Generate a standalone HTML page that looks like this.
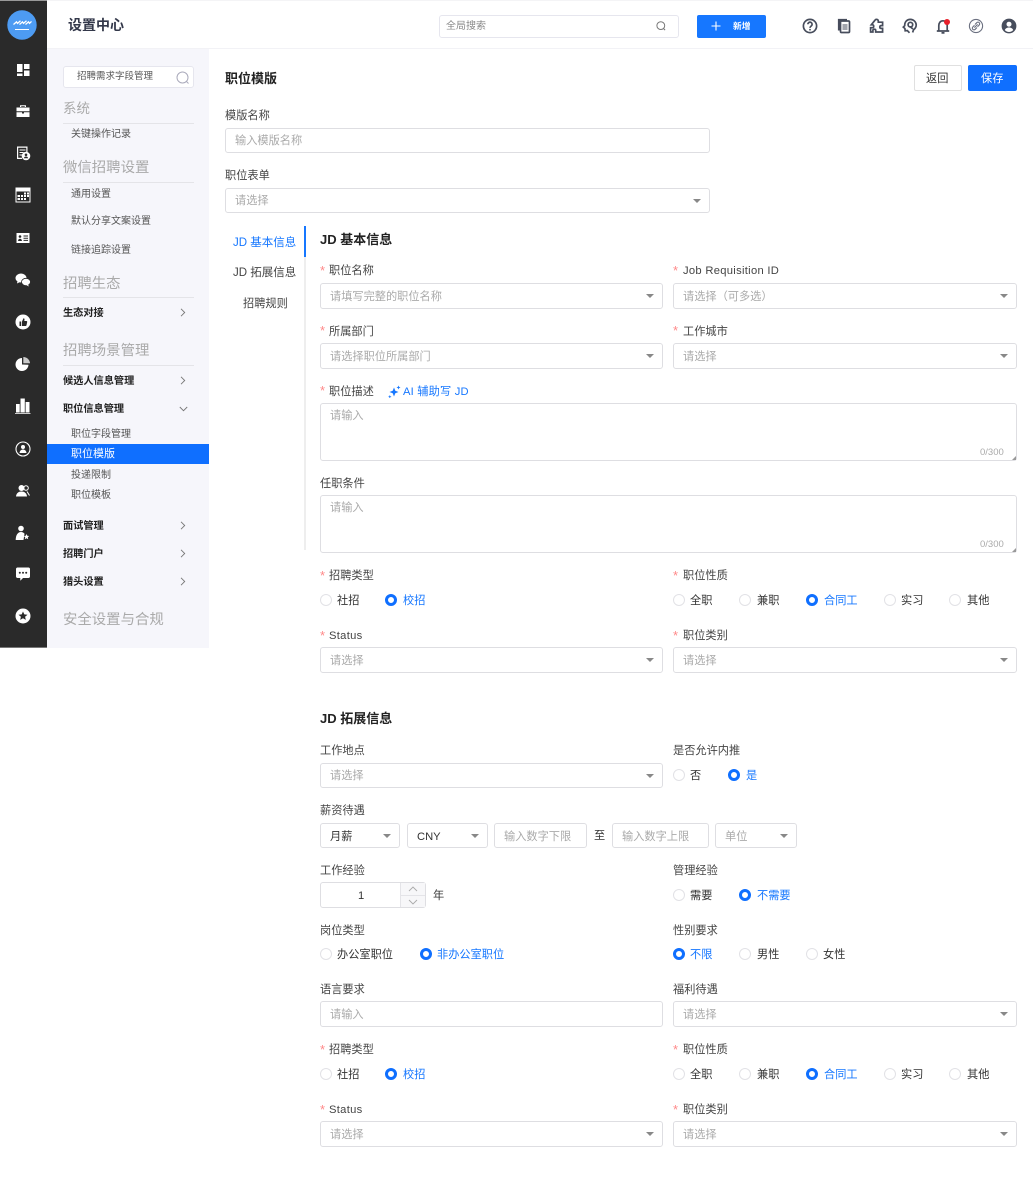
<!DOCTYPE html>
<html lang="zh-CN"><head><meta charset="utf-8"><title>设置中心</title>
<style>
*{box-sizing:border-box}
html,body{margin:0;padding:0;background:#fff;width:1033px;height:1177px;overflow:hidden}
#w{position:absolute;left:0;top:0;width:1033px;height:1177px;overflow:hidden;filter:blur(.35px);font-family:"Liberation Sans","Noto Sans CJK SC",sans-serif;font-size:11.2px;color:#333}
.a,.t,.c,.r,.s,svg{position:absolute}
.t{line-height:16px;height:16px;white-space:nowrap;margin-top:1px}
.l{color:#444}
.p{color:#aaa}
.c{border:1px solid #dedee2;border-radius:3px;background:#fff;height:26px}
.s::after{content:"";position:absolute;right:8px;top:10px;border:4px solid transparent;border-top:4.5px solid #888;border-bottom:0}
.c>span{position:absolute;left:9px;top:5px;line-height:16px;color:#aaa;white-space:nowrap}
.r{width:12px;height:12px;border-radius:50%;border:1px solid #e2e2e6;background:#fff}
.r.on{border:3.5px solid #0f6fff}
.b{color:#1677ff}
.st{color:#f88;font-size:13px;margin-top:0}
.e{letter-spacing:.3px}
.g{color:#aaa;font-size:14.4px;left:63px}
.i{color:#555;font-size:10px;left:71px;margin-top:2px}
.m{color:#222;font-size:10.2px;font-weight:700;left:63px;margin-top:2px}
.h{height:1px;left:63px;width:131px;background:#e4e4e8}
.ar{left:180px;width:6px;height:9px}
svg.n{left:15px;width:16px;height:16px;fill:#fff;stroke:none}
svg.u{top:17px;width:18px;height:18px;fill:none;stroke:#474d5c;stroke-width:1.7}
</style></head><body><div id="w">

<!-- top header -->
<div class="a" style="left:47px;top:0;width:986px;height:1px;background:#f4f4f6"></div>
<div class="a" style="left:47px;top:48px;width:986px;height:1px;background:#f2f2f6"></div>
<div class="t" style="left:68px;top:17px;margin-top:0;font-size:14px;font-weight:700;color:#33384a">设置中心</div>
<div class="a" style="left:439px;top:15px;width:240px;height:23px;border:1px solid #e6e6ee;border-radius:3px"></div>
<div class="t" style="left:446px;top:18px;font-size:10px;color:#888">全局搜索</div>
<svg class="a" style="left:655px;top:20px;width:12px;height:12px;fill:none;stroke:#777;stroke-width:1" viewBox="0 0 12 12"><circle cx="5.8" cy="5.6" r="3.9"/><path d="M8.5 8.5l1.6 1.6"/></svg>
<div class="a" style="left:697px;top:15px;width:69px;height:23px;background:#1677ff;border-radius:2px"></div>
<svg class="a" style="left:711px;top:21px;width:10px;height:10px;stroke:#fff;stroke-width:1.1" viewBox="0 0 10 10"><path d="M5 .5v9M.5 5h9"/></svg>
<div class="t" style="left:733px;top:18px;margin-top:0;font-size:8.8px;color:#fff;font-weight:700">新增</div>

<svg class="u" style="left:801px" viewBox="0 0 18 18"><circle cx="9" cy="9" r="6.6"/><path d="M6.9 7.3a2.1 2.1 0 1 1 3.3 1.7c-.8.6-1.2.9-1.2 1.9"/><circle cx="9" cy="12.7" r=".6" fill="#474d5c" stroke-width=".6"/></svg>
<svg class="u" style="left:835px" viewBox="0 0 18 18"><path d="M4 13.5V3h8" stroke-width="2.2"/><rect x="5.5" y="4" width="9" height="11.5" rx="1"/><path d="M7.5 8h5M7.5 10h5M7.5 12h5" stroke-width="1.1"/></svg>
<svg class="u" style="left:868px" viewBox="0 0 18 18"><path d="M7 3.2c1-1.5 3.4-.9 3.3 1.1v.9h4.3v3.4h-1.5c-1.7 0-1.7 2.8 0 2.8h1.5v3.6H7.7v-1.7c0-1.5-2.8-1.5-2.8 0v1.7H2.6v-4.3h1.9c1.6 0 1.6-2.9 0-2.9H3.3L7 3.2z"/></svg>
<svg class="u" style="left:901px" viewBox="0 0 18 18"><path d="M8.5 15.8l-2.2-2.3-2.1.3-.3-2.3-1.6-1.4 1.4-1.4C3.6 4.8 6 2.4 9.3 2.4c3.3 0 5.9 2.6 5.9 5.6 0 2.2-1.2 3.7-2.6 4.7l-1 2.7"/><circle cx="9.4" cy="7.6" r="2.3"/><path d="M9.4 9.9l2.5 2"/></svg>
<svg class="u" style="left:934px" viewBox="0 0 18 18"><path d="M2.8 14h12.4M4.8 13.8V8.6C4.8 5.8 6.4 3.8 9 3.8s4.2 2 4.2 4.8v5.2M7.5 15.9h3"/></svg>
<div class="a" style="left:944px;top:19px;width:6px;height:6px;border-radius:50%;background:#e8202a"></div>
<svg class="u" style="left:967px;stroke-width:1.1;stroke:#6b7080" viewBox="0 0 18 18"><circle cx="9" cy="9" r="6.6"/><path d="M8 7.5l1.8-1.8a1.6 1.6 0 0 1 2.4 2.3L10.5 9.8M10 10.5l-1.8 1.8a1.6 1.6 0 0 1-2.4-2.3L7.5 8.2M7.4 10.6l3.2-3.2"/></svg>
<svg class="a" style="left:1000px;top:17px;width:18px;height:18px" viewBox="0 0 18 18"><circle cx="9" cy="9" r="7.4" fill="#474d5c"/><circle cx="9" cy="7.2" r="2.5" fill="#fff"/><path d="M4.8 13c.8-1.8 2.4-2.5 4.2-2.5s3.4.7 4.2 2.5a5.5 5.5 0 0 1-8.4 0z" fill="#fff"/></svg>

<!-- left nav -->
<div class="a" style="left:0;top:0;width:47px;height:648px;background:#2a2a2a;border-top:1px solid #999;border-bottom:1px solid #777"></div>
<svg class="a" style="left:7px;top:10px;width:30px;height:30px" viewBox="0 0 30 30"><circle cx="15" cy="15" r="14.7" fill="#4d9bf2"/><path d="M6.500 14.500l3-2.600 1 1.500 3-2.600M12.500 14.500l3-2.600 1 1.500 3-2.600M18.500 14.500l3-2.600 1 1.500 2-2" fill="none" stroke="#fff" stroke-width="1.300"/><path d="M8 19.500h14" stroke="#fff" stroke-width="1"/></svg>
<svg class="n" style="top:62px" viewBox="0 0 16 16"><path d="M2 2h5.500v8H2zM9 2h5.500v5H9zM9 8.500h5.500V14H9zM2 11.500h5.500V14H2z"/></svg>
<svg class="n" style="top:103px" viewBox="0 0 16 16"><path d="M5 4V2.200h6V4h-1.200V3.300H6.200V4zM1.500 4.500h13v3.700h-13zM1.500 9.200h5.500V10.500h2V9.200h5.500V14H1.500z"/></svg>
<svg class="n" style="top:145px" viewBox="0 0 16 16"><path d="M2 1.500h10.500V8h-1.200V2.700H3.200v10h3.800V14H2z"/><path d="M4.500 4.500h6v1h-6zM4.500 7h4v1h-4zM4.500 9.500h2.500v1h-2.500z"/><circle cx="11" cy="11" r="4.300"/><circle cx="11" cy="9.800" r="1.300" fill="#2a2a2a"/><path d="M8.800 13.300c.4-1.300 1.200-1.800 2.200-1.800s1.800.5 2.200 1.800z" fill="#2a2a2a"/></svg>
<svg class="n" style="left:15px;top:187px" viewBox="0 0 16 16"><path d="M.5.500h15v15H.5zM1.500 4.500v10h13v-10z"/><path d="M9 5.500h2v2H9zM12 5.500h2v2h-2zM6 8h2v2H6zM9 8h2v2H9zM12 8h2v2h-2zM2.500 8h2.500v2H2.500zM2.500 11h2.500v2H2.500zM6 11h2v2H6zM9 11h2v2H9z"/></svg>
<svg class="n" style="top:230px" viewBox="0 0 16 16"><path d="M1.500 3h13v10h-13z"/><circle cx="5" cy="6.500" r="1.300" fill="#2a2a2a"/><path d="M3 11c.2-1.600 1-2.300 2-2.300s1.800.7 2 2.300zM8.500 5.500h4.500v1H8.500zM8.500 7.700h4.500v1H8.500zM8.500 9.900h4.500v1H8.500z" fill="#2a2a2a"/></svg>
<svg class="n" style="top:272px" viewBox="0 0 16 16"><ellipse cx="6" cy="6" rx="5.500" ry="4.500"/><path d="M2.500 9l-.5 2.500L5 10z"/><ellipse cx="11" cy="10" rx="4.500" ry="3.700" stroke="#2a2a2a" stroke-width=".8"/><path d="M13 12.800l1 1.700-2.600-1.200z"/></svg>
<svg class="n" style="top:314px" viewBox="0 0 16 16"><circle cx="8" cy="8" r="7.500"/><path d="M4.500 7.500h1.700v4.500H4.500zM7 7.500L8.500 4.200c.9 0 1.100.8 1 1.500l-.2 1.300h2.200c.5 0 .8.500.7 1l-.7 3.200c-.1.400-.4.800-.9.800H7z" fill="#2a2a2a"/></svg>
<svg class="n" style="top:356px" viewBox="0 0 16 16"><path d="M7 2a6.500 6.500 0 1 0 6.500 6.800L7 8.500z"/><path d="M8.300 1v6.200h6.700A6.800 6.800 0 0 0 8.300 1z" opacity=".75"/></svg>
<svg class="n" style="top:398px" viewBox="0 0 16 16"><path d="M5.500 .5h4.300V14.500H5.500zM1 6h3.700v8.500H1zM10.600 4h3.900v10.500h-3.900zM0 15h15.500v.8H0z"/></svg>
<svg class="n" style="top:441px" viewBox="0 0 16 16"><circle cx="8" cy="8" r="7" fill="none" stroke="#fff" stroke-width="1.100"/><circle cx="8" cy="6" r="2"/><path d="M4.500 12c.3-2.500 1.800-3.500 3.500-3.500s3.200 1 3.500 3.500z"/></svg>
<svg class="n" style="top:483px" viewBox="0 0 16 16"><circle cx="6.500" cy="5" r="3"/><path d="M1 13.500c.3-3.500 2.700-5 5.500-5s5.200 1.500 5.500 5z"/><circle cx="11" cy="5" r="2.300" fill="none" stroke="#fff"/><path d="M12 8.500l2.500 4" stroke="#fff" stroke-width="1"/></svg>
<svg class="n" style="top:525px" viewBox="0 0 16 16"><circle cx="6" cy="3.500" r="2.800"/><path d="M.7 15c0-5 2.200-8 5.300-8 1.500 0 2.700.7 3.500 1.800L8.500 15z"/><path d="M11.500 9l.8 1.800 1.900.2-1.400 1.300.4 1.900-1.700-1-1.700 1 .4-1.900L8.800 11l1.900-.2z"/></svg>
<svg class="n" style="top:566px" viewBox="0 0 16 16"><path d="M2.500 1.500h11c.8 0 1.500.7 1.500 1.500v7.500c0 .8-.7 1.500-1.500 1.500H8l-2.700 2.800V12H2.500C1.700 12 1 11.300 1 10.500V3c0-.8.700-1.500 1.500-1.500z"/><circle cx="4.800" cy="6.800" r="1" fill="#2a2a2a"/><circle cx="8" cy="6.800" r="1" fill="#2a2a2a"/><circle cx="11.200" cy="6.800" r="1" fill="#2a2a2a"/></svg>
<svg class="n" style="top:608px" viewBox="0 0 16 16"><circle cx="8" cy="8" r="7.500"/><path d="M8 3.500l1.300 2.900 3.200.3-2.400 2.100.7 3.100L8 10.300l-2.800 1.600.7-3.100-2.400-2.100 3.200-.3z" fill="#2a2a2a"/></svg>

<!-- sidebar -->
<div class="a" style="left:47px;top:49px;width:162px;height:599px;background:#f6f6fb"></div>
<div class="a" style="left:63px;top:66px;width:131px;height:22px;background:#fff;border:1px solid #e6e6ee;border-radius:3px"></div>
<div class="t" style="left:77px;top:68px;font-size:9.500px;color:#555">招聘需求字段管理</div>
<svg class="a" style="left:175px;top:70px;width:15px;height:15px;fill:none;stroke:#aab;stroke-width:1" viewBox="0 0 15 15"><circle cx="7.500" cy="7.500" r="5.500"/><path d="M11.500 11.500l2 2"/></svg>

<div class="t g" style="top:100px;font-size:13.500px">系统</div><div class="a h" style="top:123px"></div>
<div class="t i" style="top:125px">关键操作记录</div>
<div class="t g" style="top:159px">微信招聘设置</div><div class="a h" style="top:182px"></div>
<div class="t i" style="top:185px">通用设置</div>
<div class="t i" style="top:212px">默认分享文案设置</div>
<div class="t i" style="top:241px">链接追踪设置</div>
<div class="t g" style="top:275px">招聘生态</div><div class="a h" style="top:297px"></div>
<div class="t m" style="top:304px">生态对接</div>
<div class="t g" style="top:342px">招聘场景管理</div><div class="a h" style="top:365px"></div>
<div class="t m" style="top:372px">候选人信息管理</div>
<div class="t m" style="top:400px">职位信息管理</div>
<div class="t i" style="top:425px">职位字段管理</div>
<div class="a" style="left:47px;top:444px;width:162px;height:20px;background:#0f6fff"></div>
<div class="t" style="left:71px;top:445px;font-size:11px;color:#fff">职位模版</div>
<div class="t i" style="top:466px">投递限制</div>
<div class="t i" style="top:486px">职位模板</div>
<div class="t m" style="top:517px">面试管理</div>
<div class="t m" style="top:545px">招聘门户</div>
<div class="t m" style="top:573px">猎头设置</div>
<div class="t g" style="top:611px">安全设置与合规</div>
<svg class="a ar" style="top:308px" viewBox="0 0 6 9" fill="none" stroke="#777" stroke-width=".9"><path d="M1 .8l3.700 3.700L1 8.200"/></svg>
<svg class="a ar" style="top:376px" viewBox="0 0 6 9" fill="none" stroke="#777" stroke-width=".9"><path d="M1 .8l3.700 3.700L1 8.200"/></svg>
<svg class="a" style="left:179px;top:406px;width:9px;height:6px" viewBox="0 0 9 6" fill="none" stroke="#777" stroke-width=".9"><path d="M.8 1l3.700 3.700L8.200 1"/></svg>
<svg class="a ar" style="top:521px" viewBox="0 0 6 9" fill="none" stroke="#777" stroke-width=".9"><path d="M1 .8l3.700 3.700L1 8.200"/></svg>
<svg class="a ar" style="top:549px" viewBox="0 0 6 9" fill="none" stroke="#777" stroke-width=".9"><path d="M1 .8l3.700 3.700L1 8.200"/></svg>
<svg class="a ar" style="top:577px" viewBox="0 0 6 9" fill="none" stroke="#777" stroke-width=".9"><path d="M1 .8l3.700 3.700L1 8.200"/></svg>

<!-- page head -->
<div class="t" style="left:225px;top:70px;font-size:13px;font-weight:700;color:#222">职位模版</div>
<div class="a" style="left:914px;top:65px;width:48px;height:26px;border:1px solid #e0e0e0;border-radius:2px"></div>
<div class="t" style="left:926px;top:70px;color:#333">返回</div>
<div class="a" style="left:968px;top:65px;width:49px;height:26px;background:#0f6fff;border-radius:2px"></div>
<div class="t" style="left:981px;top:70px;color:#fff">保存</div>

<div class="t l" style="left:225px;top:107px">模版名称</div>
<div class="c" style="left:225px;top:128px;width:485px;height:25px"><span style="top:4px">输入模版名称</span></div>
<div class="t l" style="left:225px;top:167px">职位表单</div>
<div class="c s" style="left:225px;top:188px;width:485px;height:25px"><span style="top:4px">请选择</span></div>

<!-- anchors -->
<div class="a" style="left:304px;top:226px;width:2px;height:324px;background:#eeeeee"></div>
<div class="a" style="left:304px;top:226px;width:2px;height:31px;background:#1677ff"></div>
<div class="t b" style="left:233px;top:234px;font-size:11.500px">JD 基本信息</div>
<div class="t l" style="left:233px;top:264px;font-size:11.500px">JD 拓展信息</div>
<div class="t l" style="left:243px;top:295px">招聘规则</div>

<!-- JD basic -->
<div class="t" style="left:320px;top:231px;font-size:13px;font-weight:700;color:#222">JD 基本信息</div>

<div class="t st" style="left:320px;top:263px">*</div><div class="t l" style="left:329px;top:262px">职位名称</div>
<div class="c s" style="left:320px;top:283px;width:343px"><span>请填写完整的职位名称</span></div>
<div class="t st" style="left:673px;top:263px">*</div><div class="t l e" style="left:683px;top:262px">Job Requisition ID</div>
<div class="c s" style="left:673px;top:283px;width:344px"><span>请选择（可多选）</span></div>

<div class="t st" style="left:320px;top:323px">*</div><div class="t l" style="left:329px;top:323px">所属部门</div>
<div class="c s" style="left:320px;top:343px;width:343px"><span>请选择职位所属部门</span></div>
<div class="t st" style="left:673px;top:323px">*</div><div class="t l" style="left:683px;top:323px">工作城市</div>
<div class="c s" style="left:673px;top:343px;width:344px"><span>请选择</span></div>

<div class="t st" style="left:320px;top:383px">*</div><div class="t l" style="left:329px;top:383px">职位描述</div>
<svg class="a" style="left:388px;top:385px;width:13px;height:13px;fill:#1677ff" viewBox="0 0 13 13"><path d="M6 2.500l1.300 3.200 3.200 1.300-3.200 1.300L6 11.500 4.700 8.300 1.500 7l3.200-1.300zM10.500 .5l.6 1.400 1.400.6-1.400.6-.6 1.400-.6-1.400-1.400-.6 1.400-.6zM1.800 10l.5 1.200 1.200.5-1.200.5-.5 1.200-.5-1.200-1.200-.5 1.200-.5z"/></svg>
<div class="t b" style="left:403px;top:383px;letter-spacing:.2px">AI 辅助写 JD</div>

<div class="c" style="left:320px;top:403px;width:697px;height:58px"><span style="top:4px">请输入</span><span style="left:659px;top:43px;font-size:9.500px;line-height:12px">0/300</span></div>
<svg class="a" style="left:1012px;top:456px;width:4px;height:4px" viewBox="0 0 5 5"><path d="M5 0v5H0z" fill="#999"/></svg>
<div class="t l" style="left:320px;top:475px">任职条件</div>
<div class="c" style="left:320px;top:495px;width:697px;height:58px"><span style="top:4px">请输入</span><span style="left:659px;top:43px;font-size:9.500px;line-height:12px">0/300</span></div>
<svg class="a" style="left:1012px;top:548px;width:4px;height:4px" viewBox="0 0 5 5"><path d="M5 0v5H0z" fill="#999"/></svg>

<div class="t st" style="left:320px;top:568px">*</div><div class="t l" style="left:329px;top:567px">招聘类型</div>
<div class="r" style="left:320px;top:594px"></div><div class="t" style="left:337px;top:592px">社招</div>
<div class="r on" style="left:385px;top:594px"></div><div class="t b" style="left:403px;top:592px">校招</div>
<div class="t st" style="left:673px;top:568px">*</div><div class="t l" style="left:683px;top:567px">职位性质</div>
<div class="r" style="left:673px;top:594px"></div><div class="t" style="left:690px;top:592px">全职</div>
<div class="r" style="left:739px;top:594px"></div><div class="t" style="left:757px;top:592px">兼职</div>
<div class="r on" style="left:806px;top:594px"></div><div class="t b" style="left:824px;top:592px">合同工</div>
<div class="r" style="left:884px;top:594px"></div><div class="t" style="left:901px;top:592px">实习</div>
<div class="r" style="left:949px;top:594px"></div><div class="t" style="left:967px;top:592px">其他</div>

<div class="t st" style="left:320px;top:628px">*</div><div class="t l e" style="left:329px;top:627px">Status</div>
<div class="c s" style="left:320px;top:647px;width:343px"><span>请选择</span></div>
<div class="t st" style="left:673px;top:628px">*</div><div class="t l" style="left:683px;top:627px">职位类别</div>
<div class="c s" style="left:673px;top:647px;width:344px"><span>请选择</span></div>

<!-- JD extended -->
<div class="t" style="left:320px;top:710px;font-size:13px;font-weight:700;color:#222">JD 拓展信息</div>
<div class="t l" style="left:320px;top:742px">工作地点</div>
<div class="c s" style="left:320px;top:763px;width:343px;height:25px"><span style="top:4px">请选择</span></div>
<div class="t l" style="left:673px;top:742px">是否允许内推</div>
<div class="r" style="left:673px;top:769px"></div><div class="t" style="left:690px;top:767px">否</div>
<div class="r on" style="left:728px;top:769px"></div><div class="t b" style="left:746px;top:767px">是</div>

<div class="t l" style="left:320px;top:802px">薪资待遇</div>
<div class="c s" style="left:320px;top:823px;width:80px;height:25px"><span style="color:#333">月薪</span></div>
<div class="c s" style="left:407px;top:823px;width:81px;height:25px"><span style="color:#333">CNY</span></div>
<div class="c" style="left:494px;top:823px;width:93px;height:25px"><span>输入数字下限</span></div>
<div class="t" style="left:594px;top:827px">至</div>
<div class="c" style="left:612px;top:823px;width:97px;height:25px"><span>输入数字上限</span></div>
<div class="c s" style="left:715px;top:823px;width:82px;height:25px"><span>单位</span></div>

<div class="t l" style="left:320px;top:862px">工作经验</div>
<div class="c" style="left:320px;top:882px;width:106px"><span style="left:37px;color:#333">1</span></div>
<div class="a" style="left:400px;top:883px;width:25px;height:24px;background:#f7f7f9;border-left:1px solid #e4e4e8"></div>
<div class="a" style="left:400px;top:895px;width:25px;height:1px;background:#e4e4e8"></div>
<svg class="a" style="left:408px;top:886px;width:10px;height:6px" viewBox="0 0 10 6" fill="none" stroke="#aaa" stroke-width=".9"><path d="M1 5l4-4 4 4"/></svg>
<svg class="a" style="left:408px;top:899px;width:10px;height:6px" viewBox="0 0 10 6" fill="none" stroke="#aaa" stroke-width=".9"><path d="M1 1l4 4 4-4"/></svg>
<div class="t" style="left:433px;top:887px">年</div>
<div class="t l" style="left:673px;top:862px">管理经验</div>
<div class="r" style="left:673px;top:889px"></div><div class="t" style="left:690px;top:887px">需要</div>
<div class="r on" style="left:739px;top:889px"></div><div class="t b" style="left:757px;top:887px">不需要</div>

<div class="t l" style="left:320px;top:922px">岗位类型</div>
<div class="r" style="left:320px;top:948px"></div><div class="t" style="left:337px;top:946px">办公室职位</div>
<div class="r on" style="left:420px;top:948px"></div><div class="t b" style="left:437px;top:946px">非办公室职位</div>
<div class="t l" style="left:673px;top:922px">性别要求</div>
<div class="r on" style="left:673px;top:948px"></div><div class="t b" style="left:690px;top:946px">不限</div>
<div class="r" style="left:739px;top:948px"></div><div class="t" style="left:757px;top:946px">男性</div>
<div class="r" style="left:806px;top:948px"></div><div class="t" style="left:823px;top:946px">女性</div>

<div class="t l" style="left:320px;top:981px">语言要求</div>
<div class="c" style="left:320px;top:1001px;width:343px"><span>请输入</span></div>
<div class="t l" style="left:673px;top:981px">福利待遇</div>
<div class="c s" style="left:673px;top:1001px;width:344px"><span>请选择</span></div>

<div class="t st" style="left:320px;top:1042px">*</div><div class="t l" style="left:329px;top:1041px">招聘类型</div>
<div class="r" style="left:320px;top:1068px"></div><div class="t" style="left:337px;top:1066px">社招</div>
<div class="r on" style="left:385px;top:1068px"></div><div class="t b" style="left:403px;top:1066px">校招</div>
<div class="t st" style="left:673px;top:1042px">*</div><div class="t l" style="left:683px;top:1041px">职位性质</div>
<div class="r" style="left:673px;top:1068px"></div><div class="t" style="left:690px;top:1066px">全职</div>
<div class="r" style="left:739px;top:1068px"></div><div class="t" style="left:757px;top:1066px">兼职</div>
<div class="r on" style="left:806px;top:1068px"></div><div class="t b" style="left:824px;top:1066px">合同工</div>
<div class="r" style="left:884px;top:1068px"></div><div class="t" style="left:901px;top:1066px">实习</div>
<div class="r" style="left:949px;top:1068px"></div><div class="t" style="left:967px;top:1066px">其他</div>

<div class="t st" style="left:320px;top:1102px">*</div><div class="t l e" style="left:329px;top:1101px">Status</div>
<div class="c s" style="left:320px;top:1121px;width:343px"><span>请选择</span></div>
<div class="t st" style="left:673px;top:1102px">*</div><div class="t l" style="left:683px;top:1101px">职位类别</div>
<div class="c s" style="left:673px;top:1121px;width:344px"><span>请选择</span></div>

</div></body></html>
